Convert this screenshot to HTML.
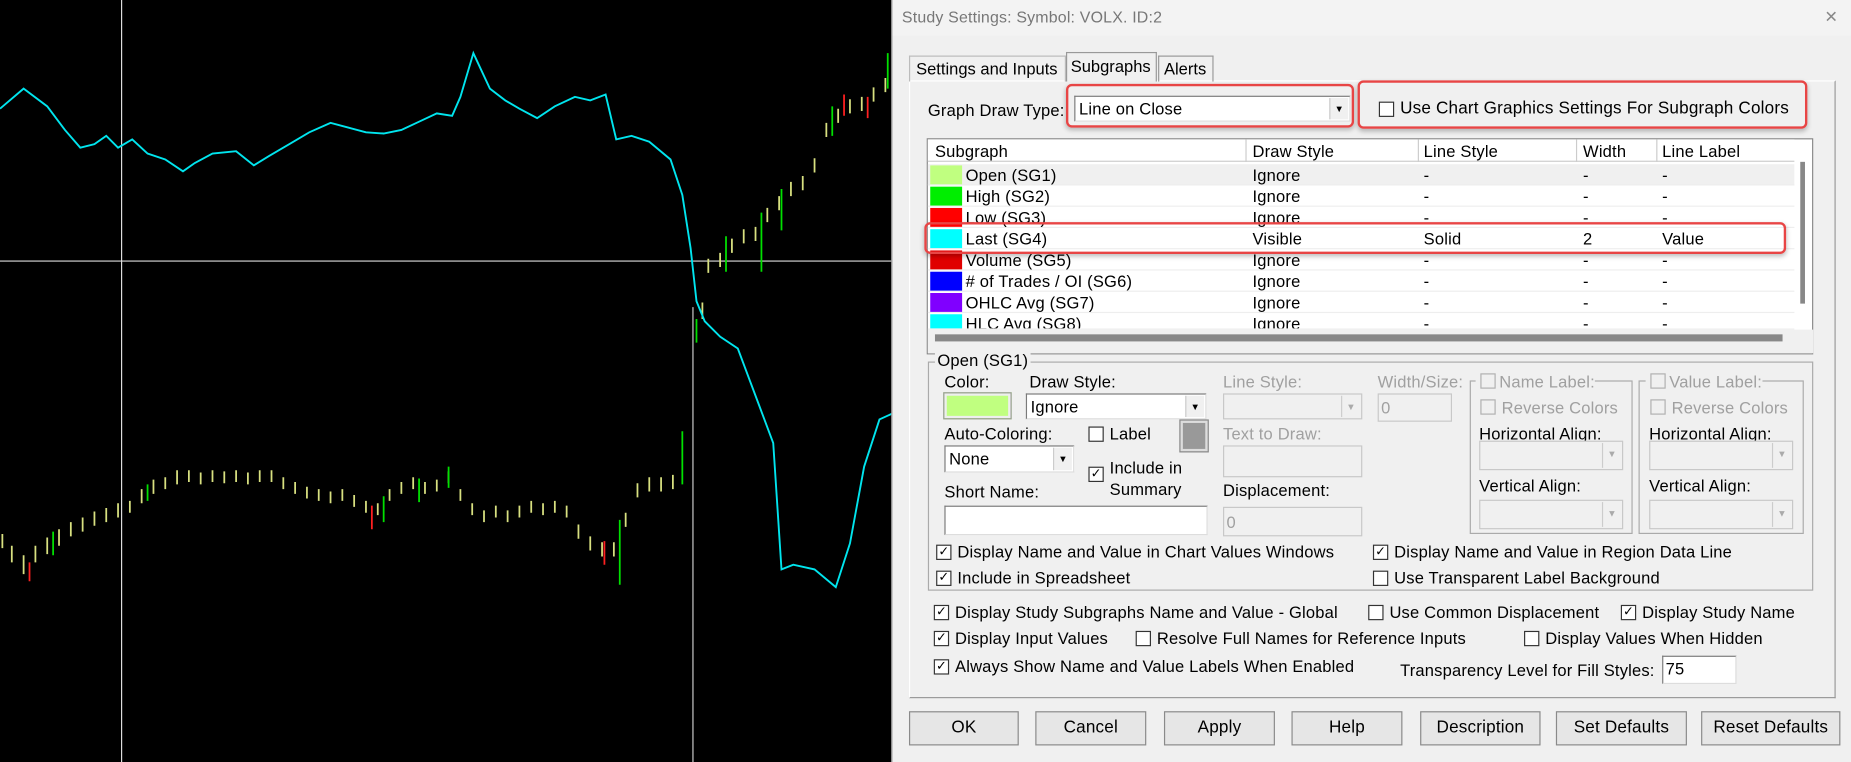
<!DOCTYPE html>
<html><head><meta charset="utf-8"><style>
*{margin:0;padding:0;box-sizing:border-box}
html,body{width:1851px;height:762px;overflow:hidden;background:#000}
#w{position:absolute;left:0;top:0;width:1568px;height:645px;transform-origin:0 0;transform:scale(1.1805,1.1814);font-family:"Liberation Sans",Arial,sans-serif;font-size:14px;letter-spacing:0.15px;color:#000}
.a{position:absolute;white-space:nowrap}
.dlg{position:absolute;left:755px;top:0;width:813px;height:645px;background:#f0f0f0;border-left:1px solid #999}
.g{color:#a0a0a0}
.cb{position:absolute;width:13px;height:13px;background:#fff;border:1px solid #333;font-size:11px;line-height:11px;text-align:center;letter-spacing:0}
.cb.d{border-color:#b0b0b0;background:#f0f0f0}
.box{position:absolute;background:#fff;border:1px solid #7a7a7a;border-right-color:#ddd;border-bottom-color:#ddd}
.box.d{background:#f0f0f0;border-color:#c8c8c8}
.dd{position:absolute;right:1px;top:1px;bottom:1px;width:16px;background:#f0f0f0;border-left:1px solid #ccc;font-size:8px;text-align:center;line-height:20px}
.btn{position:absolute;top:602px;height:29px;background:#e6e6e6;border:1px solid #8a8a8a;text-align:center;line-height:27px;font-size:14.5px}
.red{position:absolute;border:2px solid #e84545;border-radius:5px;box-shadow:0 2px 4px rgba(0,0,0,.25)}
.row{position:absolute;left:786px;width:734px;height:18px;border-bottom:1px solid #eee}
.row span{position:absolute;top:1px}
.sw{position:absolute;left:2px;top:1px;width:27px;height:16px}
</style></head><body><div id="w">
<svg class="a" style="left:0;top:0" width="756" height="645">
<rect width="756" height="645" fill="#000"/>
<line x1="103" y1="0" x2="103" y2="645" stroke="#ddd" stroke-width="1"/>
<line x1="0" y1="221" x2="756" y2="221" stroke="#ddd" stroke-width="1"/>
<line x1="587" y1="260" x2="587" y2="645" stroke="#ccc" stroke-width="1"/>
<g stroke="#d8e080" stroke-width="1.5">
<path d="M2 452v12M10 462v14M20 470v16M30 462v14M40 455v14M50 448v14M60 442v12M70 438v12M80 433v12M90 430v12M100 426v12M110 424v10M120 414v12M130 406v12M140 404v10M150 398v12M160 398v10M170 400v10M180 398v10M190 399v10M200 398v10M210 400v10M220 398v10M230 398v10M240 404v10M250 408v10M260 412v10M270 414v10M280 416v10M290 414v10M300 419v10M310 424v10M320 426v10M330 414v10M340 408v10M350 404v10M360 408v10M370 406v10M380 399v10M390 414v10M400 426v10M410 432v10M420 428v10M430 432v10M440 428v10M450 424v10M460 426v10M470 424v10M480 428v10M490 444v12M500 454v12M510 459v12M520 459v12M530 434v12M540 409v12M550 404v12M560 404v12M570 402v12M595 256v14M600 219v12M610 214v12M620 202v12M630 194v12M640 192v12M650 176v12M660 166v12M670 154v12M680 149v12M690 134v12M700 104v12M710 92v12M720 84v12M730 82v12M740 74v12M750 66v12"/>
</g>
<g stroke="#00e000" stroke-width="1.5"><path d="M45 450v20M125 410v14M325 420v22M355 405v20M380 395v18M525 440v55M578 365v45M590 270v20M615 200v30M645 180v50M662 160v35M705 90v25M752 45v30"/></g>
<g stroke="#ff2020" stroke-width="1.5"><path d="M25 476v16M315 428v20M512 458v20M715 80v18M735 82v18"/></g>
<polyline fill="none" stroke="#00e5ee" stroke-width="1.6" points="0,92 20,75 40,90 55,110 68,125 80,122 90,115 100,125 112,118 125,130 140,135 155,145 165,138 180,130 200,128 215,140 228,132 245,122 262,112 280,104 295,108 310,112 325,113 340,110 355,103 370,96 383,98 390,82 401,45 415,75 428,85 440,92 455,100 470,90 487,82 500,85 513,80 522,118 535,115 550,120 568,135 578,165 585,210 590,255 597,272 610,285 625,295 640,335 655,375 662,482 672,478 690,482 708,497 720,460 732,395 745,355 756,350"/>
</svg>
<div class="dlg">
<div class="a" style="left:0;top:0;width:813px;height:30px;background:#f3f3f3"></div>
<div class="a" style="left:8px;top:7px;font-size:13.5px;color:#777">Study Settings: Symbol: VOLX. ID:2</div>
<div class="a" style="left:790px;top:4px;font-size:18px;color:#888">×</div>
</div>
<div class="a" style="left:770px;top:68px;width:785px;height:523px;border:1px solid #999;border-top-color:#fff;border-left-color:#fff"></div>
<div class="a" style="left:770px;top:47px;width:133px;height:22px;border:1px solid #bbb;border-bottom:none;padding:2px 5px;font-size:14px;letter-spacing:0">Settings and Inputs</div>
<div class="a" style="left:903px;top:44px;width:77px;height:25px;border:1px solid #999;border-bottom:none;background:#f0f0f0;padding:3px 3px;font-size:14px;letter-spacing:0">Subgraphs</div>
<div class="a" style="left:981px;top:47px;width:47px;height:22px;border:1px solid #999;border-bottom:none;padding:2px 4px;font-size:14px;letter-spacing:0">Alerts</div>
<div class="a" style="left:786px;top:85px">Graph Draw Type:</div>
<div class="box" style="left:910px;top:81px;width:234px;height:22px"><span class="a" style="left:3px;top:2px">Line on Close</span><div class="dd">▼</div></div>
<div class="red" style="left:903px;top:71px;width:244px;height:37px"></div>
<div class="cb" style="left:1168px;top:86px"></div>
<div class="a" style="left:1186px;top:84px;font-size:14.5px">Use Chart Graphics Settings For Subgraph Colors</div>
<div class="red" style="left:1150px;top:68px;width:381px;height:41px"></div>
<div class="a" style="left:785px;top:117px;width:751px;height:183px;background:#fff;border:1px solid #888"></div>
<div class="a" style="left:786px;top:118px;width:734px;height:19px;background:#fff;border-bottom:1px solid #ccc"></div>
<div class="a" style="left:792px;top:120px">Subgraph</div><div class="a" style="left:1061px;top:120px">Draw Style</div><div class="a" style="left:1206px;top:120px">Line Style</div><div class="a" style="left:1341px;top:120px">Width</div><div class="a" style="left:1408px;top:120px">Line Label</div>
<div class="a" style="left:1055px;top:118px;width:1px;height:19px;background:#ccc"></div><div class="a" style="left:1201px;top:118px;width:1px;height:19px;background:#ccc"></div><div class="a" style="left:1335px;top:118px;width:1px;height:19px;background:#ccc"></div><div class="a" style="left:1403px;top:118px;width:1px;height:19px;background:#ccc"></div>
<div class="row" style="top:139px;background:#f0f0f0"><div class="sw" style="background:#c0ff80"></div><span style="left:32px">Open (SG1)</span><span style="left:275px">Ignore</span><span style="left:420px">-</span><span style="left:555px">-</span><span style="left:622px">-</span></div>
<div class="row" style="top:157px"><div class="sw" style="background:#00ee00"></div><span style="left:32px">High (SG2)</span><span style="left:275px">Ignore</span><span style="left:420px">-</span><span style="left:555px">-</span><span style="left:622px">-</span></div>
<div class="row" style="top:175px"><div class="sw" style="background:#f00"></div><span style="left:32px">Low (SG3)</span><span style="left:275px">Ignore</span><span style="left:420px">-</span><span style="left:555px">-</span><span style="left:622px">-</span></div>
<div class="row" style="top:193px"><div class="sw" style="background:#00ffff"></div><span style="left:32px">Last (SG4)</span><span style="left:275px">Visible</span><span style="left:420px">Solid</span><span style="left:555px">2</span><span style="left:622px">Value</span></div>
<div class="row" style="top:211px"><div class="sw" style="background:#e00000"></div><span style="left:32px">Volume (SG5)</span><span style="left:275px">Ignore</span><span style="left:420px">-</span><span style="left:555px">-</span><span style="left:622px">-</span></div>
<div class="row" style="top:229px"><div class="sw" style="background:#0000ff"></div><span style="left:32px"># of Trades / OI (SG6)</span><span style="left:275px">Ignore</span><span style="left:420px">-</span><span style="left:555px">-</span><span style="left:622px">-</span></div>
<div class="row" style="top:247px"><div class="sw" style="background:#8000ff"></div><span style="left:32px">OHLC Avg (SG7)</span><span style="left:275px">Ignore</span><span style="left:420px">-</span><span style="left:555px">-</span><span style="left:622px">-</span></div>
<div class="row" style="top:265px;height:14px;overflow:hidden"><div class="sw" style="background:#00ffff"></div><span style="left:32px">HLC Avg (SG8)</span><span style="left:275px">Ignore</span><span style="left:420px">-</span><span style="left:555px">-</span><span style="left:622px">-</span></div>
<div class="a" style="left:786px;top:279px;width:750px;height:20px;background:#f0f0f0"></div>
<div class="a" style="left:792px;top:283px;width:718px;height:6px;background:#888"></div>
<div class="a" style="left:1525px;top:137px;width:4px;height:120px;background:#888"></div>
<div class="red" style="left:783px;top:188px;width:730px;height:27px"></div>
<div class="a" style="left:786px;top:306px;width:750px;height:194px;border:1px solid #aaa"></div>
<div class="a" style="left:792px;top:297px;background:#f0f0f0;padding:0 2px">Open (SG1)</div>
<div class="a" style="left:800px;top:315px">Color:</div>
<div class="a" style="left:799px;top:332px;width:58px;height:23px;border:1px solid #999;background:#c0ff80;box-shadow:inset 0 0 0 2px #eee"></div>
<div class="a" style="left:872px;top:315px">Draw Style:</div>
<div class="box" style="left:869px;top:333px;width:153px;height:22px"><span class="a" style="left:3px;top:2px">Ignore</span><div class="dd">▼</div></div>
<div class="a g" style="left:1036px;top:315px">Line Style:</div>
<div class="box d" style="left:1036px;top:333px;width:118px;height:22px"><div class="dd" style="color:#aaa">▼</div></div>
<div class="a g" style="left:1167px;top:315px">Width/Size:</div>
<div class="box d" style="left:1167px;top:333px;width:63px;height:24px"><span class="a g" style="left:2px;top:3px">0</span></div>
<div class="a" style="left:1245px;top:322px;width:138px;height:130px;border:1px solid #aaa"></div>
<div class="a" style="left:1388px;top:322px;width:140px;height:130px;border:1px solid #aaa"></div>
<div class="a g" style="left:1250px;top:315px;background:#f0f0f0;padding-left:20px">Name Label:</div><div class="cb d" style="left:1254px;top:316px"></div>
<div class="a g" style="left:1394px;top:315px;background:#f0f0f0;padding-left:20px">Value Label:</div><div class="cb d" style="left:1398px;top:316px"></div>
<div class="cb d" style="left:1254px;top:338px"></div><div class="a g" style="left:1272px;top:337px">Reverse Colors</div>
<div class="cb d" style="left:1398px;top:338px"></div><div class="a g" style="left:1416px;top:337px">Reverse Colors</div>
<div class="a" style="left:1253px;top:359px">Horizontal Align:</div><div class="a" style="left:1397px;top:359px">Horizontal Align:</div>
<div class="box d" style="left:1253px;top:373px;width:122px;height:25px"><div class="dd" style="color:#aaa">▼</div></div>
<div class="box d" style="left:1397px;top:373px;width:122px;height:25px"><div class="dd" style="color:#aaa">▼</div></div>
<div class="a" style="left:1253px;top:403px">Vertical Align:</div><div class="a" style="left:1397px;top:403px">Vertical Align:</div>
<div class="box d" style="left:1253px;top:423px;width:122px;height:25px"><div class="dd" style="color:#aaa">▼</div></div>
<div class="box d" style="left:1397px;top:423px;width:122px;height:25px"><div class="dd" style="color:#aaa">▼</div></div>
<div class="a" style="left:800px;top:359px">Auto-Coloring:</div>
<div class="box" style="left:800px;top:377px;width:110px;height:23px"><span class="a" style="left:3px;top:2px">None</span><div class="dd">▼</div></div>
<div class="cb" style="left:922px;top:361px"></div><div class="a" style="left:940px;top:359px">Label</div>
<div class="a" style="left:1000px;top:356px;width:23px;height:26px;background:#999;border:2px solid #ddd;outline:1px solid #888"></div>
<div class="a g" style="left:1036px;top:359px">Text to Draw:</div>
<div class="box d" style="left:1036px;top:377px;width:118px;height:27px"></div>
<div class="cb" style="left:922px;top:395px">✓</div><div class="a" style="left:940px;top:387px;line-height:18px">Include in<br>Summary</div>
<div class="a" style="left:800px;top:408px">Short Name:</div>
<div class="box" style="left:800px;top:428px;width:223px;height:25px"></div>
<div class="a" style="left:1036px;top:407px">Displacement:</div>
<div class="box d" style="left:1036px;top:429px;width:118px;height:25px"><span class="a g" style="left:2px;top:4px">0</span></div>
<div class="cb" style="left:793px;top:461px">✓</div><div class="a" style="left:811px;top:459px">Display Name and Value in Chart Values Windows</div>
<div class="cb" style="left:793px;top:483px">✓</div><div class="a" style="left:811px;top:481px">Include in Spreadsheet</div>
<div class="cb" style="left:1163px;top:461px">✓</div><div class="a" style="left:1181px;top:459px">Display Name and Value in Region Data Line</div>
<div class="cb" style="left:1163px;top:483px"></div><div class="a" style="left:1181px;top:481px">Use Transparent Label Background</div>
<div class="cb" style="left:791px;top:512px">✓</div><div class="a" style="left:809px;top:510px">Display Study Subgraphs Name and Value - Global</div>
<div class="cb" style="left:1159px;top:512px"></div><div class="a" style="left:1177px;top:510px">Use Common Displacement</div>
<div class="cb" style="left:1373px;top:512px">✓</div><div class="a" style="left:1391px;top:510px">Display Study Name</div>
<div class="cb" style="left:791px;top:534px">✓</div><div class="a" style="left:809px;top:532px">Display Input Values</div>
<div class="cb" style="left:962px;top:534px"></div><div class="a" style="left:980px;top:532px">Resolve Full Names for Reference Inputs</div>
<div class="cb" style="left:1291px;top:534px"></div><div class="a" style="left:1309px;top:532px">Display Values When Hidden</div>
<div class="cb" style="left:791px;top:558px">✓</div><div class="a" style="left:809px;top:556px">Always Show Name and Value Labels When Enabled</div>
<div class="a" style="left:1186px;top:559px">Transparency Level for Fill Styles:</div>
<div class="box" style="left:1408px;top:555px;width:63px;height:24px"><span class="a" style="left:2px;top:2px">75</span></div>
<div class="btn" style="left:770px;width:93px">OK</div>
<div class="btn" style="left:877px;width:94px">Cancel</div>
<div class="btn" style="left:986px;width:94px">Apply</div>
<div class="btn" style="left:1094px;width:94px">Help</div>
<div class="btn" style="left:1203px;width:102px">Description</div>
<div class="btn" style="left:1318px;width:111px">Set Defaults</div>
<div class="btn" style="left:1441px;width:118px">Reset Defaults</div>
</div></body></html>
